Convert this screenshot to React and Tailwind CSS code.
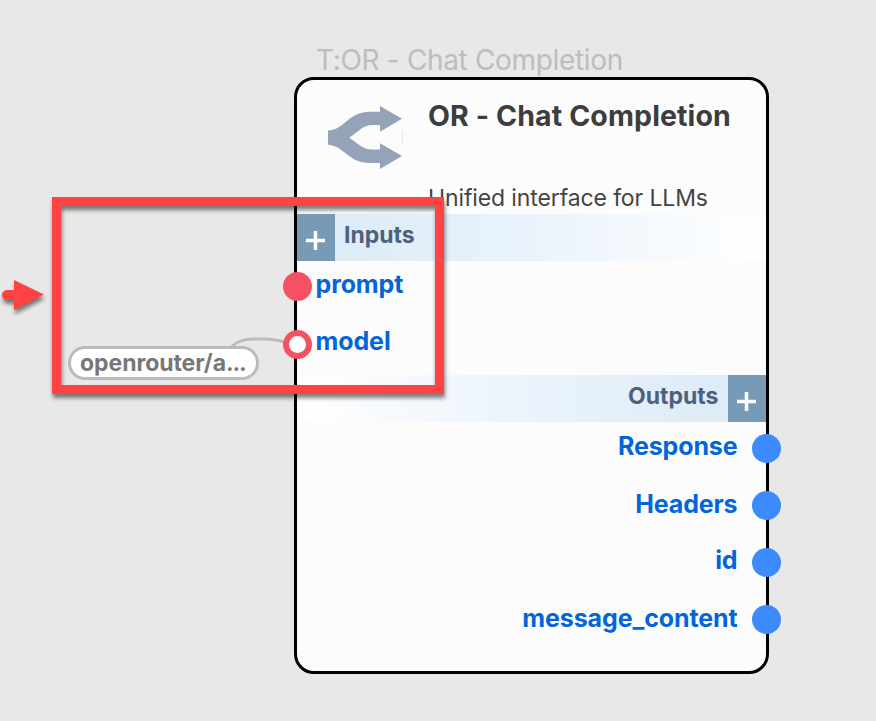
const inputs = [
  { name: "prompt", connected: false },
  { name: "model", connected: true },
];
const outputs = ["Response", "Headers", "id", "message_content"];

function BranchIcon() {
  return (
    <svg className="ml-[31px] mt-[25px] h-[66px] w-[76px] shrink-0" viewBox="0 0 76 66">
      <path
        fill="#94a3b8"
        d="M0 25.500C6 25 9 23.500 14 20C23 12.500 29 6.700 43 6.700H52V1L74 13.700L52 26.700V20H44C35 20 30 27 21.300 32.700C30 38.500 35 44.500 44 44.500H52V38.300L74 51L52 64V58H43C29 58 23 52.500 14 45.500C9 41.500 6 40.500 0 39.700Z"
      />
      <path d="M74.500 25V39" stroke="#e3e7ef" strokeWidth="1" />
    </svg>
  );
}

function AddButton() {
  return (
    <button className="flex h-[47px] w-[38px] shrink-0 items-center justify-center bg-[#779bb7]">
      <svg className="mr-px mt-[5px] h-[19px] w-[19px]" viewBox="0 0 19 19">
        <path d="M9.500 0V19M0 9.500H19" stroke="#fff" strokeWidth="3.500" />
      </svg>
    </button>
  );
}

function Node() {
  return (
    <section className="absolute left-[294px] top-[77px] flex h-[597px] w-[475px] flex-col rounded-[20px] border-[3px] border-black bg-[#fcfcfc]">
      <header className="flex h-[134px] shrink-0">
        <BranchIcon />
        <div className="ml-[24px] flex flex-col whitespace-nowrap pt-[22px]">
          <h1 className="text-[28.500px] font-bold leading-[28px] tracking-[0.110px] text-[#3d3d3d]">OR - Chat Completion</h1>
          <p className="mt-[56px] text-[23px] font-normal leading-[24px] tracking-[-0.120px] text-[#444]">Unified interface for LLMs</p>
        </div>
      </header>
      <div className="flex h-[47px] shrink-0 bg-linear-to-r from-[#d9eaf7] via-[#eaf3fb] to-white">
        <AddButton />
        <h2 className="ml-[9px] pt-[9px] text-[23px] font-bold leading-[24px] text-[#4c617d]">Inputs</h2>
      </div>
      <ul className="h-[114px] shrink-0">
        {inputs.map((p) => (
          <li key={p.name} className="relative flex h-[57px] pl-[18.500px] pt-[10px]">
            <span
              className={
                p.connected
                  ? "absolute -left-[14px] top-[12px] h-[29px] w-[29px] rounded-full border-[6px] border-[#f45264] bg-white"
                  : "absolute -left-[14px] top-[11px] h-[29px] w-[29px] rounded-full bg-[#f45264]"
              }
            />
            <span className="text-[25px] font-bold leading-[26px] tracking-[-0.100px] text-[#0265d9]">{p.name}</span>
          </li>
        ))}
      </ul>
      <div className="flex h-[47px] shrink-0 justify-end bg-linear-to-l from-[#d9eaf7] via-[#eaf3fb] to-white">
        <h2 className="mr-[9.500px] pt-[9px] text-[23px] font-bold leading-[24px] text-[#4c617d]">Outputs</h2>
        <AddButton />
      </div>
      <ul className="pt-px">
        {outputs.map((name) => (
          <li key={name} className="relative flex h-[57px] justify-end pr-[28.500px] pt-[11px] odd:pt-[10px] last:pt-[11px]">
            <span className="text-[25px] font-bold leading-[26px] tracking-[-0.120px] text-[#0265d9]">{name}</span>
            <span className="absolute -right-[15px] top-[11px] h-[29px] w-[29px] rounded-full bg-[#3c8afb]" />
          </li>
        ))}
      </ul>
    </section>
  );
}

export default function App() {
  return (
    <main className="relative h-[721px] w-[876px] overflow-hidden bg-[#e8e8e8] font-['Inter',sans-serif]">
      <p className="absolute left-[316px] top-[46px] whitespace-nowrap text-[28px] leading-[28px] tracking-[-0.340px] text-[#bdbdbd]">
        T:OR - Chat Completion
      </p>
      <svg className="absolute left-[220px] top-[330px] h-[30px] w-[80px]" viewBox="0 0 80 30">
        <path d="M8 20C16 12 22 9 34 9H44C54 9 60 10 70 14" fill="none" stroke="#bbb" strokeWidth="3" />
      </svg>
      <Node />
      <div className="absolute left-[68px] top-[346px] flex h-[34px] w-[191px] items-center rounded-full border-[3px] border-[#bbb] bg-white pl-[9px] text-[23px] font-bold leading-[24px] tracking-[-0.060px] text-[#777]">
        openrouter/a<span className="tracking-[-1.200px]">...</span>
      </div>
      <div className="absolute left-[52px] top-[197px] h-[197px] w-[392px] border-[9px] border-[#ff4242] drop-shadow-[1px_4px_2px_rgba(0,0,0,0.5)]" />
      <svg
        className="absolute left-0 top-[276px] h-[40px] w-[50px] drop-shadow-[1px_4px_2px_rgba(0,0,0,0.5)]"
        viewBox="0 0 50 40"
      >
        <path d="M14 4L44 18.500L14 34V24H7A5 5 0 0 1 7 14H14Z" fill="#ff4242" />
      </svg>
    </main>
  );
}
